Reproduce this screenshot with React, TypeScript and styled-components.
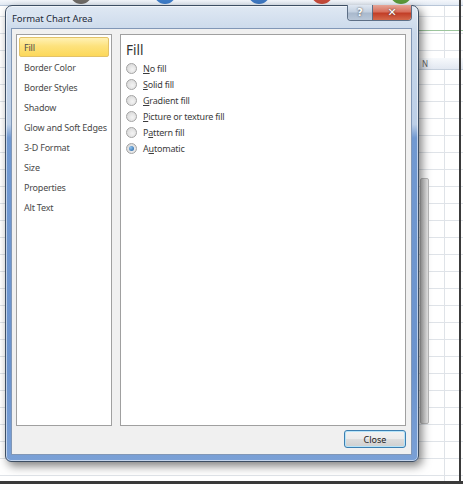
import React from 'react';
import styled, { createGlobalStyle } from 'styled-components';

const GlobalStyle = createGlobalStyle`
  html, body {
    margin: 0;
    padding: 0;
    overflow: hidden;
    background: #ffffff;
  }
  * {
    box-sizing: border-box;
  }
`;

const Screen = styled.div`
  position: relative;
  width: 463px;
  height: 484px;
  overflow: hidden;
  font-family: 'Noto Sans', 'Open Sans', sans-serif;
  background-color: #ffffff;
  background-image:
    linear-gradient(to right, transparent 444px, #dfe3e8 444px, #dfe3e8 445px, transparent 445px),
    repeating-linear-gradient(to bottom, transparent 0, transparent 16px, #dfe3e8 16px, #dfe3e8 17px);
  border-bottom: 3px solid #3a3a3a;
`;

const Ribbon = styled.div`
  height: 6px;
  display: flex;
  align-items: flex-end;
  background: linear-gradient(#f4f7fb, #e3eaf4);
  border-bottom: 1px solid #b8c6d8;
`;

const RibbonSlot = styled.div<{ $w: number }>`
  width: ${(p) => p.$w}px;
  height: 6px;
  display: flex;
  justify-content: center;
  overflow: hidden;
`;

const Orb = styled.div<{ $c: string }>`
  width: 22px;
  height: 22px;
  margin-top: -17px;
  border-radius: 50%;
  background: ${(p) => p.$c};
`;

const ColumnHeader = styled.div`
  position: absolute;
  top: 58px;
  left: 418px;
  width: 45px;
  height: 12px;
  background: linear-gradient(#f7f9fc, #e2e8f1);
  border-bottom: 1px solid #c5cfdc;
  font-size: 8px;
  color: #666;
  padding-left: 4px;
  line-height: 12px;
`;

const GreenLine = styled.div`
  position: absolute;
  top: 30px;
  left: 418px;
  width: 45px;
  height: 1px;
  background: #9cc59c;
`;

const ChartEdge = styled.div`
  position: absolute;
  top: 178px;
  left: 420px;
  width: 9px;
  height: 246px;
  border: 1px solid #b8b8b8;
  border-radius: 2px;
  background: linear-gradient(to right, #c9c9c9, #e8e8e8);
`;

const RightBorder = styled.div`
  position: absolute;
  top: 0;
  left: 459px;
  width: 2px;
  height: 484px;
  background: #3a3a3a;
`;

const Window = styled.div`
  position: absolute;
  left: 5px;
  top: 5px;
  width: 414px;
  height: 457px;
  display: flex;
  flex-direction: column;
  border: 1px solid #3d4e63;
  border-radius: 7px 7px 6px 6px;
  background: linear-gradient(
    to bottom,
    #dfe8f3 0%,
    #c9d8ea 6%,
    #bccfe7 26%,
    #7199d1 29%,
    #6b93cd 80%,
    #7aa0d6 100%
  );
  box-shadow: 3px 4px 10px rgba(0, 0, 0, 0.5), inset 0 0 0 1px rgba(255, 255, 255, 0.55);
`;

const TitleBar = styled.div`
  height: 24px;
  display: flex;
  align-items: flex-start;
  justify-content: space-between;
  padding-left: 6px;
`;

const Title = styled.div`
  margin-top: 6px;
  font-size: 9.5px;
  letter-spacing: -0.1px;
  color: #1b2a3a;
  text-shadow: 0 0 6px rgba(255, 255, 255, 0.9);
`;

const Caption = styled.div`
  display: flex;
  margin-right: 6px;
  margin-top: -1px;
  border: 1px solid #5d6f86;
  border-top: none;
  border-radius: 0 0 4px 4px;
  overflow: hidden;
`;

const CaptionButton = styled.div<{ $close?: boolean }>`
  width: ${(p) => (p.$close ? '39px' : '24px')};
  height: 15px;
  display: flex;
  align-items: center;
  justify-content: center;
  font-family: 'DejaVu Sans', sans-serif;
  font-weight: bold;
  font-size: ${(p) => (p.$close ? '11px' : '10px')};
  color: #ffffff;
  text-shadow: 0 0 2px #333;
  border-left: ${(p) => (p.$close ? '1px solid #5d6f86' : 'none')};
  background: ${(p) =>
    p.$close
      ? 'linear-gradient(#e5a597 0%, #d8705d 45%, #c23e27 55%, #d4694b 100%)'
      : 'linear-gradient(#dfe7f1 0%, #c3d0e0 45%, #a9b9cd 55%, #b9c7d8 100%)'};
`;

const Client = styled.div`
  flex: 1;
  margin: 0 6px 6px 5px;
  display: flex;
  flex-direction: column;
  gap: 4px;
  padding: 5px 5px 6px 4px;
  background: #f0f0f0;
  border: 1px solid #8197b6;
`;

const Body = styled.div`
  height: 392px;
  display: flex;
  gap: 8px;
`;

const Nav = styled.div`
  width: 96px;
  display: flex;
  flex-direction: column;
  padding: 2px;
  background: #ffffff;
  border: 1px solid #a0a0a0;
`;

const NavItem = styled.div<{ $active?: boolean }>`
  height: 20px;
  flex-shrink: 0;
  display: flex;
  align-items: center;
  padding-left: 4px;
  font-size: 9px;
  letter-spacing: -0.2px;
  color: #4a4a4a;
  white-space: nowrap;
  border: 1px solid ${(p) => (p.$active ? '#e3c268' : 'transparent')};
  border-radius: 2px;
  background: ${(p) =>
    p.$active ? 'linear-gradient(#fff1b4 0%, #fde27d 45%, #fcd85a 100%)' : 'transparent'};
`;

const Panel = styled.div`
  flex: 1;
  padding: 5px 5px;
  background: #ffffff;
  border: 1px solid #a0a0a0;
`;

const Heading = styled.div`
  font-size: 13.5px;
  color: #333333;
  line-height: 20px;
`;

const Options = styled.div`
  display: flex;
  flex-direction: column;
`;

const Option = styled.label`
  height: 16px;
  display: flex;
  align-items: center;
  gap: 6px;
  font-size: 9px;
  letter-spacing: -0.2px;
  color: #3c3c3c;
`;

const Radio = styled.span<{ $checked?: boolean }>`
  width: 11px;
  height: 11px;
  border-radius: 50%;
  border: 1px solid #a4a4a4;
  background: radial-gradient(circle at 60% 60%, #f4f4f4 0%, #dcdcdc 70%, #cfcfcf 100%);
  display: flex;
  align-items: center;
  justify-content: center;
  &::after {
    content: '';
    display: ${(p) => (p.$checked ? 'block' : 'none')};
    width: 5px;
    height: 5px;
    border-radius: 50%;
    background: radial-gradient(circle at 35% 35%, #8ec3f0, #1f5c9c);
  }
`;

const Key = styled.span`
  text-decoration: underline;
`;

const Footer = styled.div`
  display: flex;
  justify-content: flex-end;
`;

const Button = styled.button`
  width: 62px;
  height: 18px;
  padding: 0;
  font-family: 'Noto Sans', 'Open Sans', sans-serif;
  font-size: 9px;
  color: #222;
  border: 1px solid #3c7fb1;
  border-radius: 3px;
  background: linear-gradient(#f2f2f2 0%, #ebebeb 48%, #dddddd 52%, #cfcfcf 100%);
  box-shadow: inset 0 0 0 1px #b6e4f9;
`;

const navItems = [
  'Fill',
  'Border Color',
  'Border Styles',
  'Shadow',
  'Glow and Soft Edges',
  '3-D Format',
  'Size',
  'Properties',
  'Alt Text',
];

type FillOption = { before: string; key: string; after: string; checked?: boolean };

const fillOptions: FillOption[] = [
  { before: '', key: 'N', after: 'o fill' },
  { before: '', key: 'S', after: 'olid fill' },
  { before: '', key: 'G', after: 'radient fill' },
  { before: '', key: 'P', after: 'icture or texture fill' },
  { before: 'P', key: 'a', after: 'ttern fill' },
  { before: 'A', key: 'u', after: 'tomatic', checked: true },
];

const orbs = [
  { w: 64, c: 'transparent' },
  { w: 34, c: '#6e6a66' },
  { w: 55, c: 'transparent' },
  { w: 24, c: '#3d7cc9' },
  { w: 67, c: 'transparent' },
  { w: 30, c: '#3f78c2' },
  { w: 33, c: 'transparent' },
  { w: 30, c: '#c64a3a' },
  { w: 49, c: 'transparent' },
  { w: 30, c: '#5a9a3a' },
];

export default function App() {
  return (
    <Screen>
      <GlobalStyle />
      <Ribbon>
        {orbs.map((o, i) => (
          <RibbonSlot key={i} $w={o.w}>
            <Orb $c={o.c} />
          </RibbonSlot>
        ))}
      </Ribbon>
      <GreenLine />
      <ColumnHeader>N</ColumnHeader>
      <ChartEdge />
      <RightBorder />
      <Window>
        <TitleBar>
          <Title>Format Chart Area</Title>
          <Caption>
            <CaptionButton>?</CaptionButton>
            <CaptionButton $close>✕</CaptionButton>
          </Caption>
        </TitleBar>
        <Client>
          <Body>
            <Nav>
              {navItems.map((item, i) => (
                <NavItem key={item} $active={i === 0}>
                  {item}
                </NavItem>
              ))}
            </Nav>
            <Panel>
              <Heading>Fill</Heading>
              <Options>
                {fillOptions.map((o) => (
                  <Option key={o.before + o.key + o.after}>
                    <Radio $checked={o.checked} />
                    <span>
                      {o.before}
                      <Key>{o.key}</Key>
                      {o.after}
                    </span>
                  </Option>
                ))}
              </Options>
            </Panel>
          </Body>
          <Footer>
            <Button>Close</Button>
          </Footer>
        </Client>
      </Window>
    </Screen>
  );
}
